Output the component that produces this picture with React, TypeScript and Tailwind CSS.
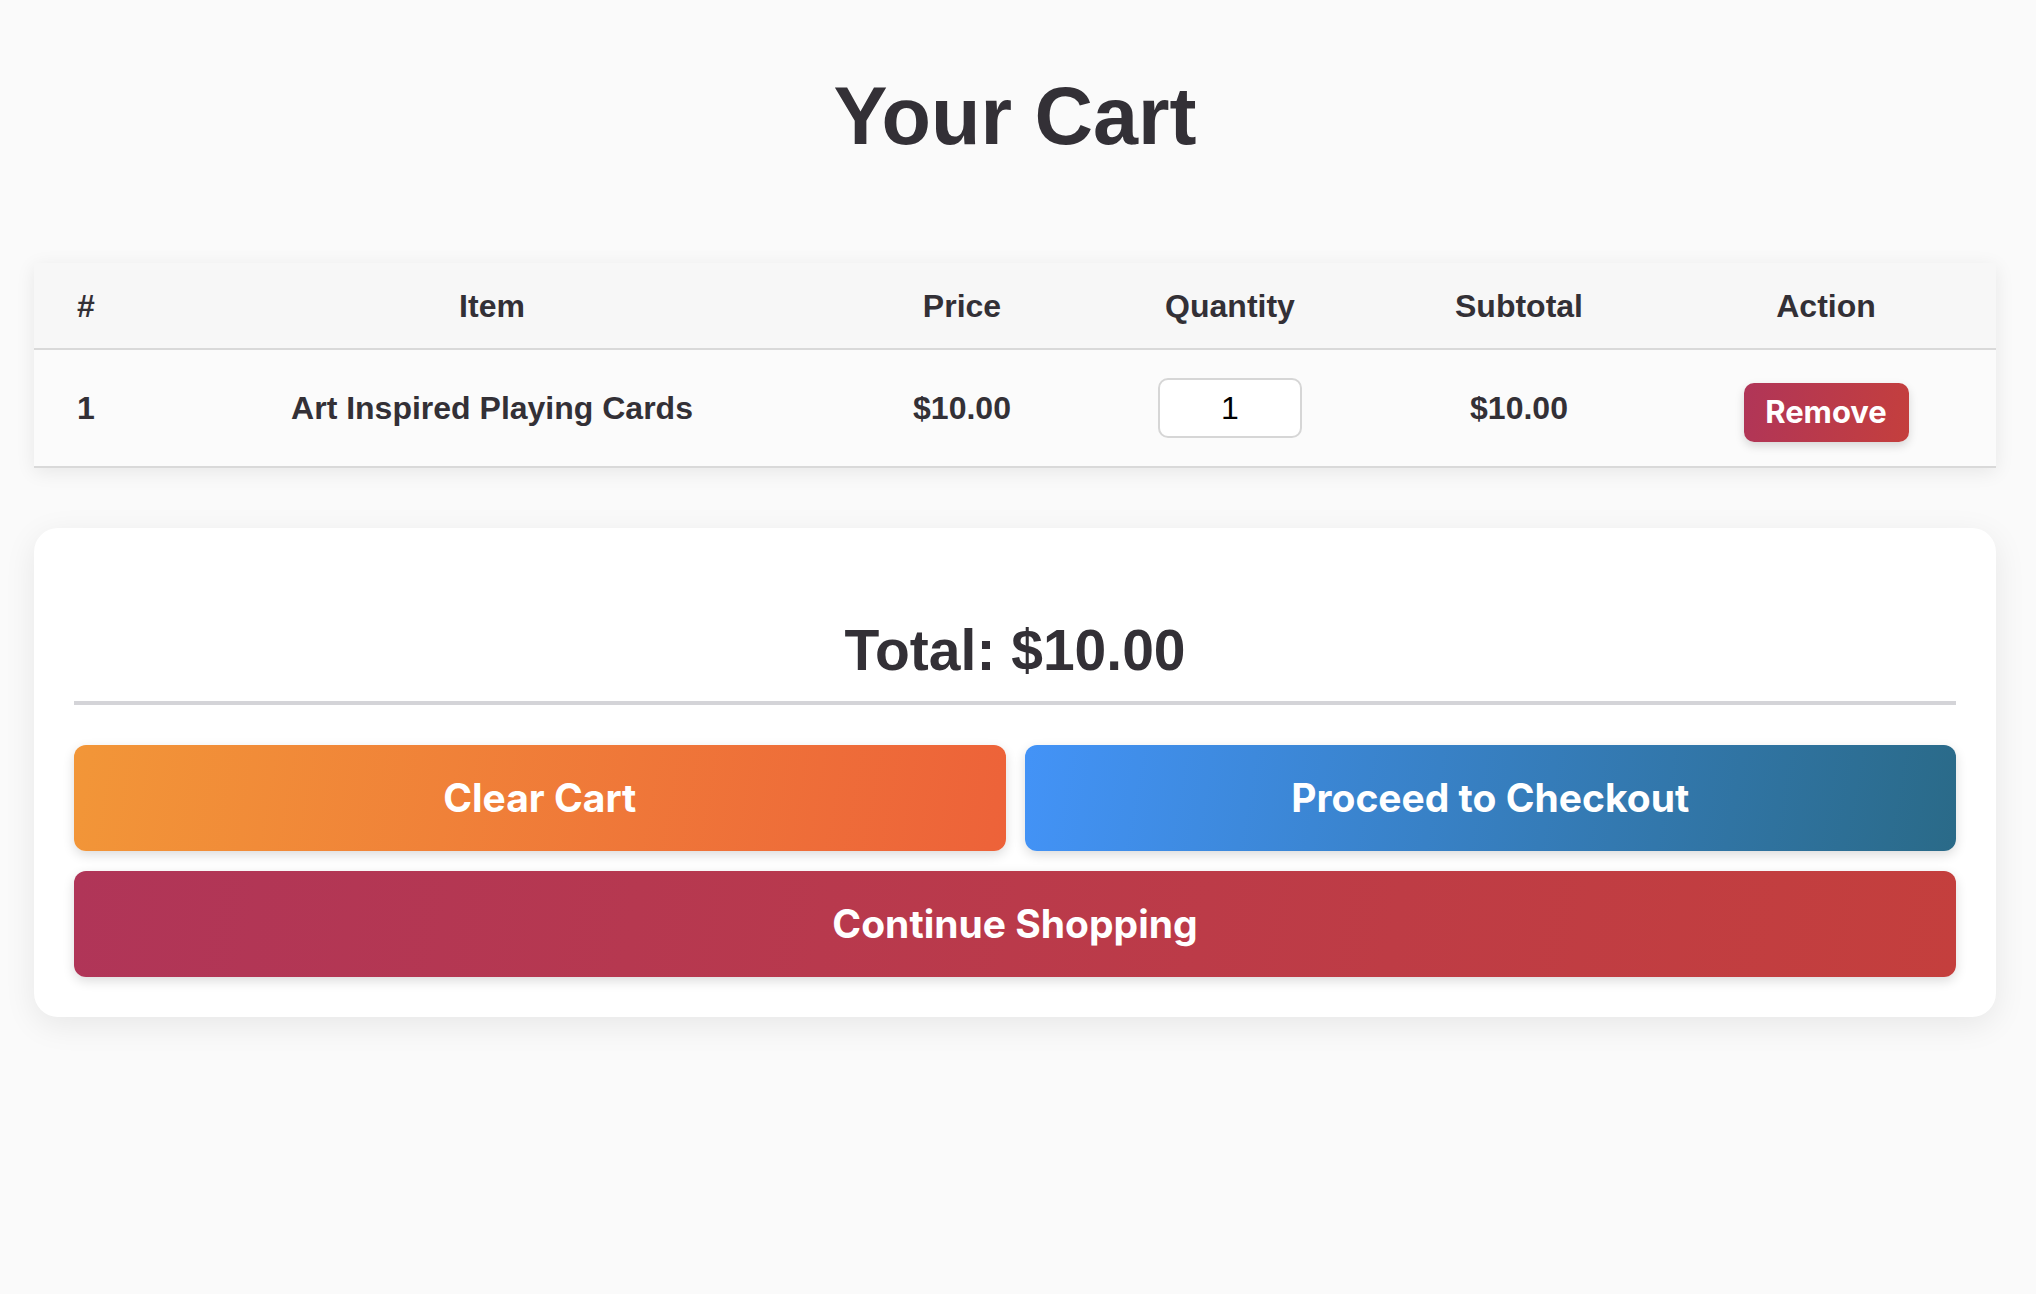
import React from 'react';

interface CartItem {
  id: number;
  name: string;
  price: number;
  quantity: number;
}

const items: CartItem[] = [{ id: 1, name: 'Art Inspired Playing Cards', price: 10, quantity: 1 }];

const cols = 'grid grid-cols-[104px_708px_232px_304px_274px_340px] items-center text-center';

export default function App() {
  const total = items.reduce((sum, i) => sum + i.price * i.quantity, 0);

  return (
    <div className="min-h-screen bg-[#fafafa] pl-[34px] pr-[40px] pt-[70px] pb-10 font-['Liberation_Sans',Arial,sans-serif] text-[#333036]">
      <h1 className="text-center text-[81px] leading-[93px] font-bold">Your Cart</h1>

      {/* Cart table */}
      <div className="mt-[100px] bg-[#fbfbfb] shadow-[0_4px_18px_rgba(0,0,0,0.08)]">
        <div className={`${cols} h-[87px] bg-[#f7f7f7] border-b-2 border-[#d9d9d9] text-[32px] font-bold`}>
          <div>#</div>
          <div>Item</div>
          <div>Price</div>
          <div>Quantity</div>
          <div>Subtotal</div>
          <div>Action</div>
        </div>
        {items.map((item, index) => (
          <div
            key={item.id}
            className={`${cols} h-[118px] border-b-2 border-[#d9d9d9] text-[32px] font-bold`}
          >
            <div>{index + 1}</div>
            <div>{item.name}</div>
            <div>${item.price.toFixed(2)}</div>
            <div className="flex justify-center">
              <input
                type="number"
                defaultValue={item.quantity}
                className="h-[60px] w-[144px] rounded-[10px] border-2 border-[#d6d6d6] bg-white text-center text-[32px] font-normal text-black outline-none [appearance:textfield] [&::-webkit-inner-spin-button]:appearance-none"
              />
            </div>
            <div>${(item.price * item.quantity).toFixed(2)}</div>
            <div className="flex justify-center">
              <button className="mt-[9px] h-[59px] w-[165px] rounded-[10px] bg-[linear-gradient(100deg,#b03558,#c43f3d)] font-['Inter',sans-serif] text-[31px] font-bold text-white shadow-[0_4px_10px_rgba(0,0,0,0.15)]">
                Remove
              </button>
            </div>
          </div>
        ))}
      </div>

      {/* Summary card */}
      <div className="mt-[60px] rounded-[24px] bg-white p-[40px] shadow-[0_8px_32px_rgba(0,0,0,0.08)]">
        <h2 className="border-b-4 border-[#d4d4d8] pt-[50px] pb-[19px] text-center text-[57px] leading-[64px] font-bold">
          Total: ${total.toFixed(2)}
        </h2>
        <div className="mt-[40px] flex flex-col gap-[20px] font-['Inter',sans-serif] text-[39px] font-bold text-white">
          <div className="grid grid-cols-2 gap-[19px]">
            <button className="h-[106px] rounded-[12px] bg-[linear-gradient(100deg,#f29638,#ed6239)] shadow-[0_4px_12px_rgba(0,0,0,0.14)]">
              Clear Cart
            </button>
            <button className="h-[106px] rounded-[12px] bg-[linear-gradient(100deg,#4393f7,#2a6a88)] shadow-[0_4px_12px_rgba(0,0,0,0.14)]">
              Proceed to Checkout
            </button>
          </div>
          <button className="h-[106px] w-full rounded-[12px] bg-[linear-gradient(100deg,#b03558,#c43f3d)] shadow-[0_4px_12px_rgba(0,0,0,0.14)]">
            Continue Shopping
          </button>
        </div>
      </div>
    </div>
  );
}
